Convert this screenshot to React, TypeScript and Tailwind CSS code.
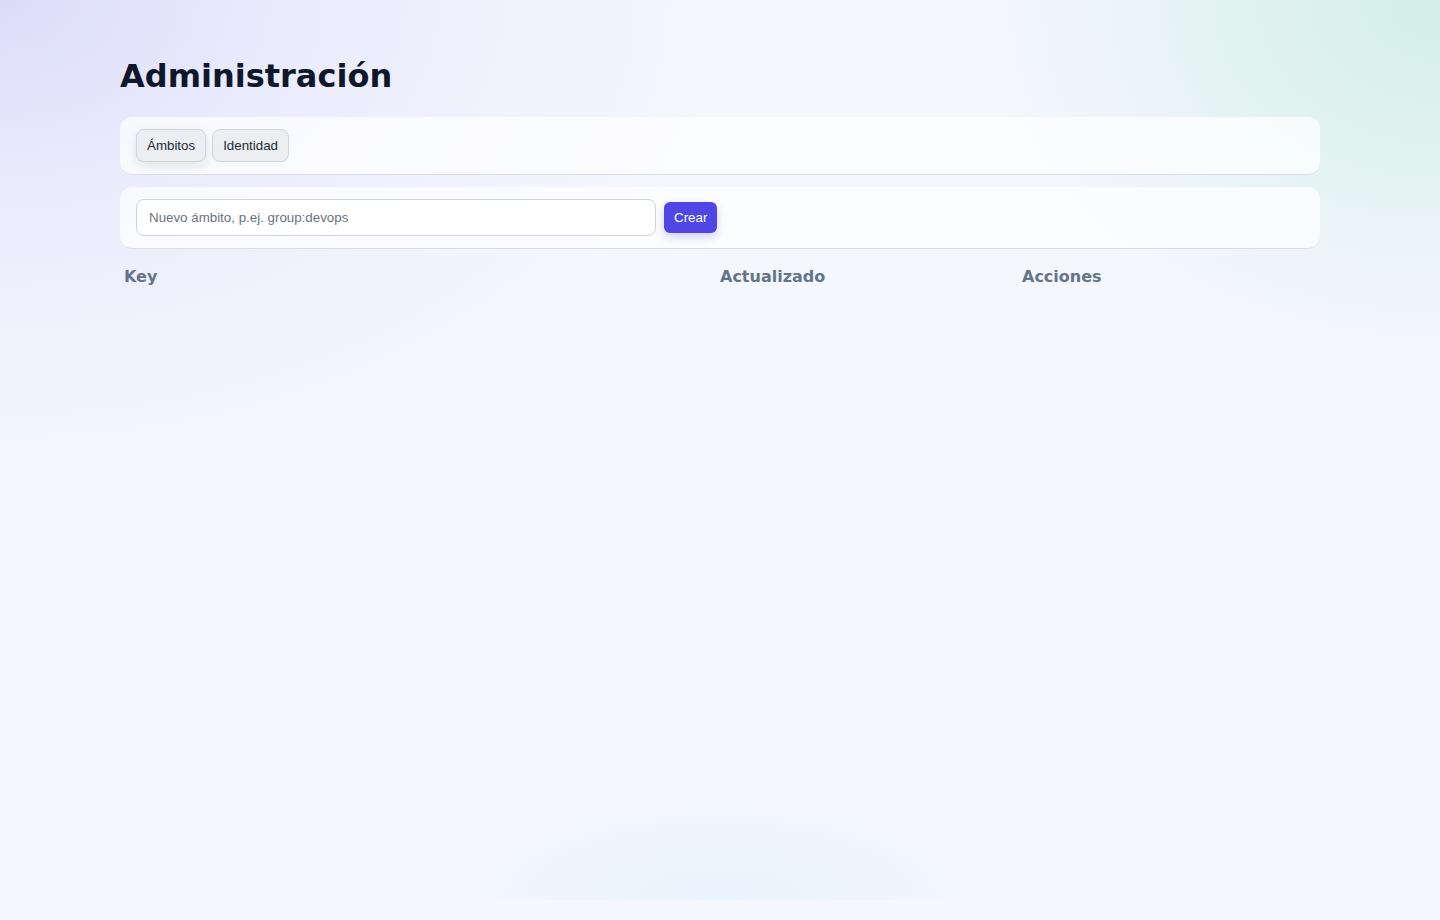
import React from "react";

export default function App() {
  return (
    <div
      className="relative min-h-[920px] w-full overflow-hidden bg-[#f5f7fe]"
      style={{ fontFamily: '"DejaVu Sans", sans-serif' }}
    >
      <div className="pointer-events-none absolute inset-0 bg-[radial-gradient(ellipse_720px_470px_at_0%_0%,#dcdcfa_0%,rgba(223,224,251,0.5)_40%,rgba(245,247,254,0)_100%)]" />
      <div className="pointer-events-none absolute inset-0 bg-[radial-gradient(ellipse_460px_360px_at_100%_0%,#d3efe7_0%,rgba(213,239,232,0.6)_45%,rgba(245,247,254,0)_100%)]" />
      <div className="pointer-events-none absolute left-[440px] top-[790px] h-[110px] w-[560px] bg-[radial-gradient(ellipse_50%_100%_at_50%_100%,#e7f3fd_0%,rgba(231,243,253,0.5)_50%,rgba(245,247,254,0)_100%)]" />

      <div className="relative mx-auto w-[1200px] pt-[55px]">
        <h1 className="text-[32px] font-bold leading-[42px] text-[#0f172a]">Administración</h1>

        <div className="mt-[20px] flex gap-[6px] rounded-[12px] border-b border-[#d8dee8] bg-white/70 px-4 py-3">
          <button
            className="h-[33px] rounded-[8px] border border-[#d1d5db] bg-[#eceef2] px-[10px] text-[13.333px] text-[#1f2937] shadow-[0_4px_12px_rgba(15,23,42,0.10)]"
            style={{ fontFamily: '"Liberation Sans", Arial, sans-serif' }}
          >
            Ámbitos
          </button>
          <button
            className="h-[33px] rounded-[8px] border border-[#d1d5db] bg-[#eceef2] px-[10px] text-[13.333px] text-[#1f2937]"
            style={{ fontFamily: '"Liberation Sans", Arial, sans-serif' }}
          >
            Identidad
          </button>
        </div>

        <div
          className="mt-3 flex items-center gap-2 rounded-[12px] border-b border-[#d8dee8] bg-white/70 px-4 py-3"
          style={{ fontFamily: '"Liberation Sans", Arial, sans-serif' }}
        >
          <input
            placeholder="Nuevo ámbito, p.ej. group:devops"
            className="h-[37px] w-[520px] rounded-[8px] border border-[#d1d5db] bg-white px-3 text-[13.333px] text-[#111827] outline-none placeholder:text-[#6b7280]"
          />
          <button className="h-[31px] rounded-[6px] bg-[#4f46e5] px-[10px] text-[13.333px] text-white shadow-[0_4px_10px_rgba(79,70,229,0.25)]">
            Crear
          </button>
        </div>

        <table className="mt-[8px] w-full table-fixed border-collapse">
          <thead>
            <tr className="text-left text-[16px] font-bold text-[#64748b]">
              <th className="w-[596px] px-1 py-[8px]">Key</th>
              <th className="w-[302px] px-1 py-[8px]">Actualizado</th>
              <th className="w-[302px] px-1 py-[8px]">Acciones</th>
            </tr>
          </thead>
          <tbody />
        </table>
      </div>
    </div>
  );
}
